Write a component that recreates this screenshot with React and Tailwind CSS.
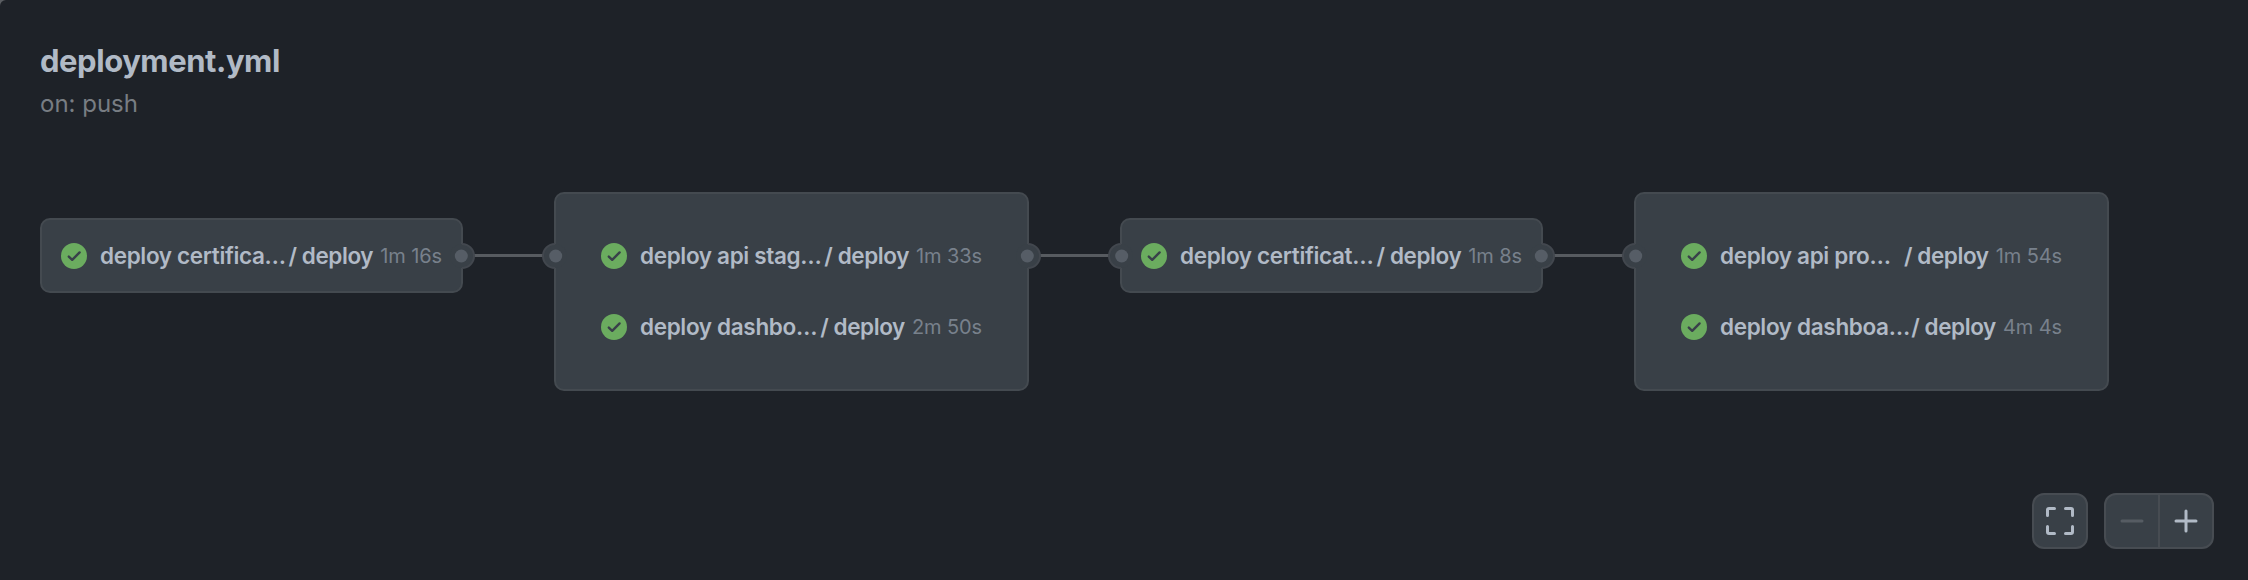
function SuccessIcon() {
  return (
    <svg className="size-[26px] shrink-0" viewBox="0 0 26 26" aria-hidden="true">
      <circle cx="13" cy="13" r="13" fill="#6bac5f" />
      <path d="M7.8 13.6L11.2 16.8L18.6 9.4" fill="none" stroke="#39404a" strokeWidth="2.4" strokeLinecap="round" strokeLinejoin="round" />
    </svg>
  );
}

function Port({ side }) {
  const right = side === 'right';
  return (
    <span
      className={
        right
          ? 'absolute top-1/2 -right-[12px] size-[26px] -translate-y-1/2'
          : 'absolute top-1/2 -left-[12px] size-[26px] -translate-y-1/2'
      }
    >
      <svg className={right ? 'size-full' : 'size-full -scale-x-100'} viewBox="0 0 26 26" aria-hidden="true">
        <circle cx="13" cy="13" r="12" fill="#394047" />
        <path d="M13 1A12 12 0 0 1 13 25" fill="none" stroke="#42474e" strokeWidth="2" />
        <circle cx="12.3" cy="13" r="6.5" fill="#565d66" />
      </svg>
    </span>
  );
}

function Job({ name, time }) {
  return (
    <div className="flex h-[26px] w-[381px] items-center whitespace-nowrap text-[22.5px] leading-[26px] font-semibold tracking-[-0.4px] text-[#b1bac6]">
      <SuccessIcon />
      <span className="ml-[13px] w-0 min-w-0 flex-1 tracking-[-0.34px]">{name}</span>
      <span>/ deploy</span>
      <span className="ml-[7px] text-[20px] font-normal tracking-[-0.1px] text-[#78818c]">{time}</span>
    </div>
  );
}

const stages = [
  { out: true, jobs: [['deploy certifica…', '1m 16s']] },
  { in: true, out: true, jobs: [['deploy api stag…', '1m 33s'], ['deploy dashbo…', '2m 50s']] },
  { in: true, out: true, jobs: [['deploy certificat…', '1m 8s']] },
  { in: true, jobs: [['deploy api pro…', '1m 54s'], ['deploy dashboa…', '4m 4s']] },
];

function Stage({ stage }) {
  const group = stage.jobs.length > 1;
  return (
    <section
      className={
        group
          ? 'relative h-[199px] w-[475px] shrink-0 rounded-[10px] border-2 border-[#444a50] bg-[#394047] pt-[48.5px] pl-[45px]'
          : 'relative mt-[26px] h-[75px] w-[423px] shrink-0 rounded-[10px] border-2 border-[#444a50] bg-[#394047] pt-[22.5px] pl-[19px]'
      }
    >
      <div className="flex flex-col gap-[45.5px]">
        {stage.jobs.map(([name, time]) => (
          <Job key={name} name={name} time={time} />
        ))}
      </div>
      <div className={group ? 'absolute -inset-x-0.5 top-[48.5px] h-[26px]' : 'absolute -inset-x-0.5 top-[22.5px] h-[26px]'}>
        {stage.in && <Port side="left" />}
        {stage.out && <Port side="right" />}
      </div>
    </section>
  );
}

export default function App() {
  return (
    <div className="bg-[#5b5e62]">
      <main className="flex h-[580px] w-[2248px] flex-col overflow-hidden rounded-tl-[6px] bg-[#1e2228] font-['Inter',sans-serif]">
        <header className="h-[192px] pt-[41px] pl-10">
          <h1 className="text-[31px] leading-10 font-bold tracking-[-0.45px] text-[#b1bac6]">deployment.yml</h1>
          <p className="pt-0.5 text-[24px] leading-[42px] text-[#787d83]">on: push</p>
        </header>
        <div className="flex h-[199px] pl-10">
          {stages.map((stage, i) => (
            <div key={i} className="flex">
              {i > 0 && <div className="mt-[62px] h-[3px] w-[91px] bg-[#575b60]" />}
              <Stage stage={stage} />
            </div>
          ))}
        </div>
        <div className="mt-[102px] flex justify-end gap-4 pr-[34px]">
          <button aria-label="Fit to window" className="flex size-14 items-center justify-center rounded-xl border-2 border-[#474c52] bg-[#394047]">
            <svg className="size-7" viewBox="0 0 28 28" fill="none" stroke="#b1bac6" strokeWidth="3" strokeLinecap="round" strokeLinejoin="round">
              <path d="M1.5 8.5V3Q1.5 1.5 3 1.5H8.5M19.5 1.5H25Q26.5 1.5 26.5 3V8.5M26.5 19.5V25Q26.5 26.5 25 26.5H19.5M8.5 26.5H3Q1.5 26.5 1.5 25V19.5" />
            </svg>
          </button>
          <div className="flex h-14 w-[110px] overflow-hidden rounded-xl border-2 border-[#474c52] bg-[#394047]">
            <button aria-label="Zoom out" className="flex w-[54px] items-center justify-center border-r-2 border-[#474c52] pr-px pb-px">
              <svg className="size-6" viewBox="0 0 24 24" stroke="#565c63" strokeWidth="3" strokeLinecap="round"><path d="M2 12H22" /></svg>
            </button>
            <button aria-label="Zoom in" className="flex flex-1 items-center justify-center pr-px pb-px">
              <svg className="size-6" viewBox="0 0 24 24" stroke="#b1bac6" strokeWidth="3" strokeLinecap="round"><path d="M2 12H22M12 2V22" /></svg>
            </button>
          </div>
        </div>
      </main>
    </div>
  );
}
